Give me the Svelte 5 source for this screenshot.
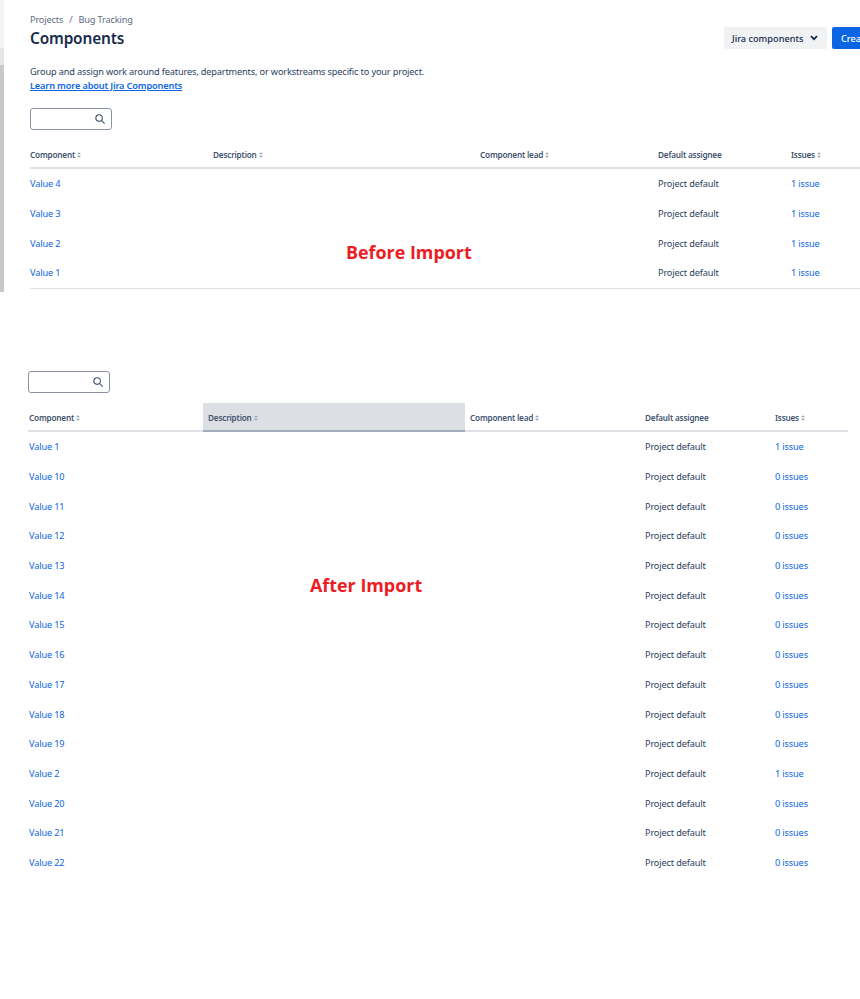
<script>
  const before = ['Value 4', 'Value 3', 'Value 2', 'Value 1'];
  const after = [
    ['Value 1', '1 issue'],
    ['Value 10', '0 issues'],
    ['Value 11', '0 issues'],
    ['Value 12', '0 issues'],
    ['Value 13', '0 issues'],
    ['Value 14', '0 issues'],
    ['Value 15', '0 issues'],
    ['Value 16', '0 issues'],
    ['Value 17', '0 issues'],
    ['Value 18', '0 issues'],
    ['Value 19', '0 issues'],
    ['Value 2', '1 issue'],
    ['Value 20', '0 issues'],
    ['Value 21', '0 issues'],
    ['Value 22', '0 issues']
  ];
</script>

{#snippet sort()}
  <svg class="sort" width="4" height="6" viewBox="0 0 5 7"><path d="M2.5 0 5 2.6H0zM2.5 7 0 4.4h5z" /></svg>
{/snippet}

{#snippet searchBox()}
  <div class="search">
    <svg width="10" height="10" viewBox="0 0 11 11" fill="none" stroke="#44546f" stroke-width="1.2">
      <circle cx="4.5" cy="4.5" r="3.6" />
      <path d="M7.3 7.3 10.3 10.3" stroke-linecap="round" />
    </svg>
  </div>
{/snippet}

<div class="page">
  <section class="before">
    <div class="gutter"></div>
    <div class="content">
      <div class="header">
        <div>
          <nav class="crumbs"><span>Projects</span><span class="slash">/</span><span>Bug Tracking</span></nav>
          <h1>Components</h1>
        </div>
        <div class="actions">
          <button class="jira-btn">
            Jira components
            <svg width="8" height="6" viewBox="0 0 8 6" fill="none" stroke="#172b4d" stroke-width="1.8"><path d="M1 1.2 4 4.2 7 1.2" /></svg>
          </button>
          <button class="create-btn">Create component</button>
        </div>
      </div>
      <p class="intro">Group and assign work around features, departments, or workstreams specific to your project.</p>
      <a class="learn" href="#top">Learn more about Jira Components</a>
      {@render searchBox()}
      <table class="tbl tbl-before">
        <thead>
          <tr>
            <th class="c1">Component{@render sort()}</th>
            <th class="c2">Description{@render sort()}</th>
            <th class="c3">Component lead{@render sort()}</th>
            <th class="c4">Default assignee</th>
            <th class="c5">Issues{@render sort()}</th>
          </tr>
        </thead>
        <tbody>
          {#each before as name}
            <tr>
              <td><a href="#top">{name}</a></td>
              <td></td>
              <td></td>
              <td>Project default</td>
              <td><a href="#top">1 issue</a></td>
            </tr>
          {/each}
        </tbody>
      </table>
    </div>
    <div class="label label-before">Before Import</div>
  </section>

  <section class="after">
    {@render searchBox()}
    <table class="tbl tbl-after">
      <thead>
        <tr>
          <th class="c1">Component{@render sort()}</th>
          <th class="c2 active">Description{@render sort()}</th>
          <th class="c3">Component lead{@render sort()}</th>
          <th class="c4">Default assignee</th>
          <th class="c5">Issues{@render sort()}</th>
        </tr>
      </thead>
      <tbody>
        {#each after as row}
          <tr>
            <td><a href="#top">{row[0]}</a></td>
            <td></td>
            <td></td>
            <td>Project default</td>
            <td><a href="#top">{row[1]}</a></td>
          </tr>
        {/each}
      </tbody>
    </table>
    <div class="label label-after">After Import</div>
  </section>
</div>

<style>
  :global(body) {
    margin: 0;
    background: #fff;
  }

  .page {
    width: 860px;
    height: 999px;
    overflow: hidden;
    font-family: "Noto Sans", sans-serif;
    font-size: 9.2px;
    letter-spacing: -0.15px;
    color: #44546f;
  }

  a {
    color: #0c66e4;
    text-decoration: none;
  }

  .before {
    position: relative;
    display: flex;
    height: 292px;
  }

  .gutter {
    flex: none;
    width: 4px;
    background: linear-gradient(#f5f5f7 48px, #e6e6e6 48px, #e6e6e6 65px, #c8c8c8 65px);
  }

  .content {
    flex: none;
    width: 856px;
    padding: 13px 0 0 26px;
    box-sizing: border-box;
  }

  .header {
    display: flex;
    justify-content: space-between;
    align-items: flex-end;
  }

  .crumbs {
    display: flex;
    gap: 6px;
    height: 13px;
    line-height: 13px;
    color: #5e6c84;
  }

  h1 {
    margin: 3px 0 0;
    font-size: 15.4px;
    line-height: 19px;
    font-weight: 600;
    color: #172b4d;
  }

  .actions {
    display: flex;
    flex: none;
    gap: 5px;
    margin: 0 -77px -1px 0;
  }

  button {
    font: inherit;
    font-weight: 500;
    letter-spacing: 0;
    border: 0;
    height: 22px;
    border-radius: 2px;
    white-space: nowrap;
  }

  .jira-btn {
    display: flex;
    align-items: center;
    justify-content: space-between;
    box-sizing: border-box;
    width: 103px;
    padding: 0 9px 0 8px;
    background: #f1f2f4;
    color: #172b4d;
  }

  .create-btn {
    box-sizing: border-box;
    width: 105px;
    padding: 0 9px;
    text-align: left;
    background: #0c66e4;
    color: #fff;
  }

  .intro {
    margin: 17px 0 0;
    line-height: 13px;
    color: #2c3e5d;
  }

  .learn {
    display: block;
    margin-top: 1px;
    line-height: 13px;
    font-weight: 600;
    text-decoration: underline;
  }

  .search {
    display: flex;
    align-items: center;
    justify-content: flex-end;
    box-sizing: border-box;
    width: 82px;
    height: 22px;
    padding-right: 6px;
    border: 1px solid #8993a4;
    border-radius: 3px;
    background: #fff;
  }

  .before .search {
    margin-top: 16px;
  }

  .tbl {
    border-collapse: collapse;
    table-layout: fixed;
  }

  .tbl th {
    padding: 2px 0 0;
    height: 25px;
    text-align: left;
    font-weight: 600;
    font-size: 8.2px;
    letter-spacing: -0.2px;
    color: #44546f;
    border-bottom: 2px solid #dfe1e6;
    white-space: nowrap;
  }

  .sort {
    margin-left: 2px;
    fill: #97a0af;
  }

  .tbl td {
    padding: 0;
    height: 29.7px;
    color: #2c3e5d;
  }

  .tbl-before {
    width: 830px;
    margin-top: 10px;
  }

  .tbl-before .c1 { width: 183px; }
  .tbl-before .c2 { width: 267px; }
  .tbl-before .c3 { width: 178px; }
  .tbl-before .c4 { width: 133px; }

  .tbl-before tbody tr:last-child td {
    border-bottom: 1px solid #dfe1e6;
  }

  .after {
    position: relative;
    padding: 79px 0 0 28px;
  }

  .tbl-after {
    width: 820px;
    margin-top: 10px;
  }

  .tbl-after th:first-child,
  .tbl-after td:first-child {
    padding-left: 1px;
  }

  .tbl-after .c1 { width: 175px; box-sizing: border-box; }
  .tbl-after .c2 { width: 262px; padding-left: 5px; box-sizing: border-box; }
  .tbl-after .c3 { width: 180px; padding-left: 5px; box-sizing: border-box; }
  .tbl-after .c4 { width: 130px; }

  .active {
    background: #dcdfe4;
  }

  .tbl-after .active {
    border-bottom-color: #a5adba;
  }

  .label {
    position: absolute;
    font-family: "Open Sans", sans-serif;
    font-size: 17.9px;
    line-height: 24px;
    font-weight: 700;
    letter-spacing: 0;
    color: #ed1c24;
    white-space: nowrap;
  }

  .label-before {
    left: 346px;
    top: 240px;
  }

  .label-after {
    left: 310px;
    top: 281px;
  }
</style>
